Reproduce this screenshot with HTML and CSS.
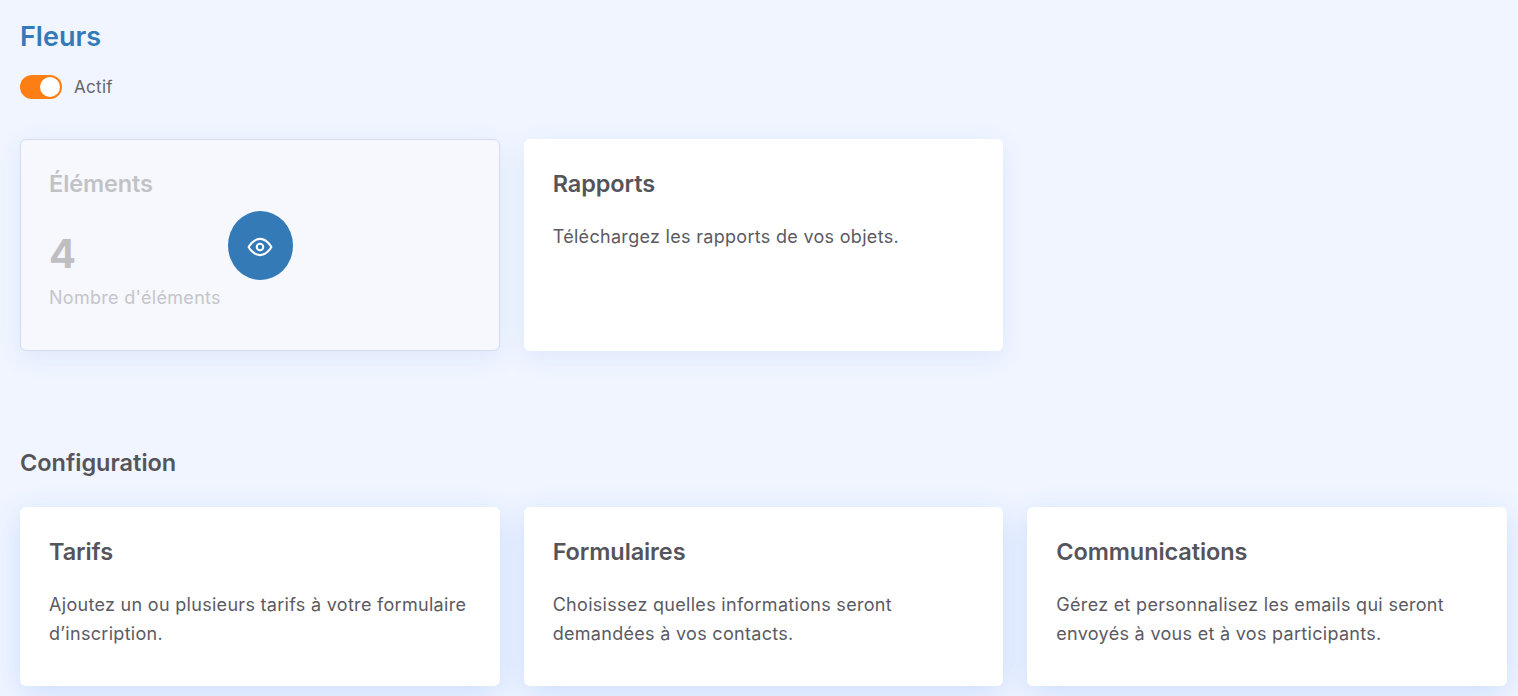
FILE: index.html
```html
<!DOCTYPE html>
<html lang="fr">
<head>
    <meta charset="UTF-8">
    <title>Fleurs</title>
    <link rel="stylesheet" href="styles.css">
</head>
<body>
    <h1 class="page-title">Fleurs</h1>

    <div class="status">
        <span class="switch"><span class="switch-knob"></span></span>
        <span class="status-label">Actif</span>
    </div>

    <div class="card-row top-row">
        <div class="card card-disabled">
            <h2 class="card-title">Éléments</h2>
            <div class="stat-number">4</div>
            <div class="stat-label">Nombre d'éléments</div>
            <span class="view-button">
                <svg width="26" height="26" viewBox="0 0 24 24" fill="none" stroke="#fff" stroke-width="1.9" stroke-linecap="round" stroke-linejoin="round">
                    <path d="M1.5 12S5.5 4.5 12 4.5 22.500 12 22.500 12 18.500 19.500 12 19.500 1.500 12 1.500 12z"/>
                    <circle cx="12" cy="12" r="3"/>
                </svg>
            </span>
        </div>
        <div class="card">
            <h2 class="card-title">Rapports</h2>
            <p class="card-text">Téléchargez les rapports de vos objets.</p>
        </div>
    </div>

    <h2 class="section-title">Configuration</h2>

    <div class="card-row bottom-row">
        <div class="card">
            <h2 class="card-title">Tarifs</h2>
            <p class="card-text">Ajoutez un ou plusieurs tarifs à votre formulaire d’inscription.</p>
        </div>
        <div class="card">
            <h2 class="card-title">Formulaires</h2>
            <p class="card-text">Choisissez quelles informations seront demandées à vos contacts.</p>
        </div>
        <div class="card">
            <h2 class="card-title">Communications</h2>
            <p class="card-text">Gérez et personnalisez les emails qui seront envoyés à vous et à vos participants.</p>
        </div>
    </div>
</body>
</html>
```

FILE: styles.css
```css
body {
    font-family: Inter, "Noto Sans", sans-serif;
    margin: 0;
    padding: 20px 11px 0 20px;
    height: 696px;
    box-sizing: border-box;
    overflow: hidden;
    color: #55545a;
    background-color: #f0f5ff;
}

.page-title {
    margin: 0;
    font-size: 27px;
    line-height: 34px;
    font-weight: 600;
    color: #337ab7;
}

.status {
    display: flex;
    align-items: center;
    gap: 12px;
    margin-top: 21px;
    height: 24px;
}

.switch {
    display: block;
    position: relative;
    width: 42px;
    height: 24px;
    border-radius: 12px;
    background-color: #fd7e14;
}

.switch-knob {
    position: absolute;
    top: 2px;
    right: 2px;
    width: 20px;
    height: 20px;
    border-radius: 50%;
    background-color: #fff;
}

.status-label {
    font-size: 17px;
    letter-spacing: 0.3px;
    color: #66656a;
}

.card-row {
    display: grid;
    grid-template-columns: repeat(3, 1fr);
    gap: 24px;
}

.top-row {
    margin-top: 40px;
}

.bottom-row {
    margin-top: 29px;
}

.card {
    position: relative;
    box-sizing: border-box;
    height: 212px;
    padding: 30px 29px 0;
    background-color: #fff;
    border-radius: 6px;
    box-shadow: 0 6px 24px rgba(90, 130, 230, 0.12);
}

.bottom-row .card {
    height: 179px;
    box-shadow: 0 8px 30px rgba(70, 130, 250, 0.2);
}

.card-disabled {
    padding: 29px 28px 0;
    border: 1px solid #d5dcf0;
    background-color: #f6f8fe;
}

.card-title {
    margin: 0;
    font-size: 23.5px;
    line-height: 30px;
    font-weight: 600;
    letter-spacing: -0.1px;
}

.card-disabled .card-title {
    color: #c2c2c6;
}

.card-text {
    margin: 23px 0 0;
    font-size: 18px;
    line-height: 29px;
    letter-spacing: 0.3px;
    color: #5b5a62;
}

.stat-number {
    margin-top: 30px;
    font-size: 40px;
    line-height: 50px;
    font-weight: 700;
    color: #bfbfc2;
}

.stat-label {
    margin-top: 8px;
    font-size: 18px;
    letter-spacing: 0.3px;
    color: #c5c5cb;
}

.view-button {
    position: absolute;
    top: 71px;
    left: 206.5px;
    width: 65px;
    height: 69px;
    padding-top: 2px;
    box-sizing: border-box;
    display: flex;
    align-items: center;
    justify-content: center;
    border-radius: 50%;
    background-color: #337ab7;
}

.section-title {
    margin: 97px 0 0;
    font-size: 23.5px;
    line-height: 30px;
    font-weight: 600;
}
```
